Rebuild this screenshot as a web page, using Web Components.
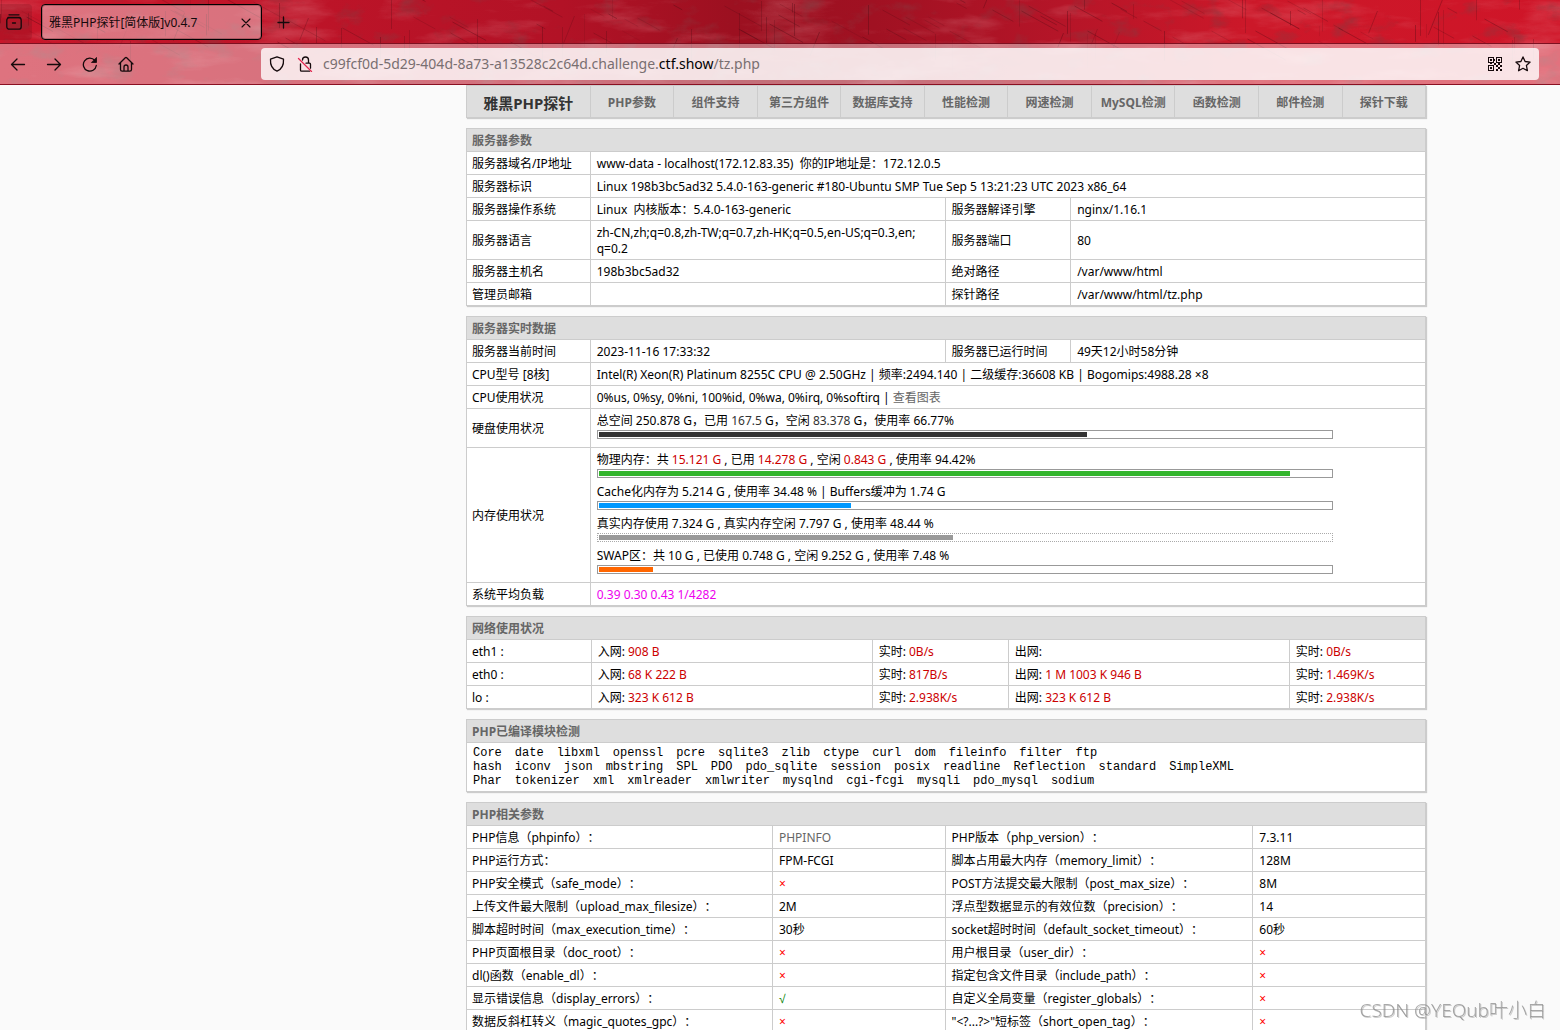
<!DOCTYPE html>
<html lang="zh-CN">
<head>
<meta charset="utf-8">
<title>雅黑PHP探针[简体版]v0.4.7</title>
<style>
html,body{margin:0;height:100%}
body{background:#fafafa;color:#000;font:12px/16px "Noto Sans","Noto Sans CJK SC",sans-serif;text-spacing-trim:space-all;display:flex;flex-direction:column;overflow:hidden}
</style>
</head>
<body>
<browser-bar></browser-bar>
<probe-page></probe-page>
<water-mark>CSDN @YEQub叶小白</water-mark>
<script>
const define=(name,html,setup)=>{
  const t=document.createElement('template');
  t.innerHTML=html;
  customElements.define(name,class extends HTMLElement{
    constructor(){super();this.attachShadow({mode:'open'}).append(t.content.cloneNode(true));}
    connectedCallback(){if(setup)setup(this,this.shadowRoot);}
  });
};

/* scratched red metal behind the tab strip and toolbar */
define('theme-texture',`
<style>:host{display:block;position:absolute;inset:0;z-index:-1;overflow:hidden}svg{display:block;width:100%;height:100%}</style>
<svg viewBox="0 0 1560 85" preserveAspectRatio="none" aria-hidden="true">
<defs>
<linearGradient id="g"><stop offset="0" stop-color="#c9162a"/><stop offset=".2" stop-color="#bd1428"/><stop offset=".36" stop-color="#b21226"/><stop offset=".47" stop-color="#9c1020"/><stop offset=".56" stop-color="#a01122"/><stop offset=".68" stop-color="#b51528"/><stop offset=".8" stop-color="#cc1829"/><stop offset="1" stop-color="#cf1528"/></linearGradient>
<filter id="w" x="0" y="0" width="100%" height="100%"><feTurbulence type="fractalNoise" baseFrequency=".012 .05" numOctaves="6" seed="4"/><feColorMatrix values="0 0 0 0 .9  0 0 0 0 .5  0 0 0 0 .52  2 0 0 0 -1"/></filter>
<filter id="d" x="0" y="0" width="100%" height="100%"><feTurbulence type="fractalNoise" baseFrequency=".03 .05" numOctaves="6" seed="9"/><feColorMatrix values="0 0 0 0 .25  0 0 0 0 .04  0 0 0 0 .05  2.6 0 0 0 -1.45"/></filter>
</defs>
<rect width="1560" height="85" fill="url(#g)"/>
<rect width="1560" height="85" filter="url(#w)" opacity=".3"/>
<rect width="1560" height="85" filter="url(#d)" opacity=".7"/>
<g id="s" fill="none" stroke="#4a0a12" stroke-width=".8"></g>
</svg>`,(el,r)=>{
  let n=11,rnd=()=>(n=(n*16807)%2147483647)/2147483647,g=r.getElementById('s');
  for(let i=0;i<150;i++){
    const p=document.createElementNS('http://www.w3.org/2000/svg','path');
    const x=Math.round(rnd()*1560)+.5,y=Math.round(rnd()*50)-8,k=rnd();
    const l=8+rnd()*30;
    p.setAttribute('d',k<.35?`M${x} ${y}v${l}`:k<.9?`M${x} ${y}l${l} ${l*.55}`:`M${x} ${y}l${-l*.4} ${l}`);
    p.setAttribute('stroke-opacity',(.12+rnd()*.35).toFixed(2));
    g.append(p);
  }
});

define('browser-bar',`
<style>
:host{display:block;flex:none;position:relative;z-index:0;font:12px/16px "Noto Sans","Noto Sans CJK SC",sans-serif;color:#15090b}
button{all:unset;box-sizing:border-box;display:grid;place-items:center;cursor:pointer}
svg{display:block;fill:none;stroke:currentColor;stroke-width:1.5;stroke-linecap:round;stroke-linejoin:round}
.tools svg,.view svg{stroke-width:1.3}
.tabs{display:flex;align-items:center;height:43px;border-bottom:1px solid #7e1020}
.view{width:32px;height:36px;padding-right:4px;background:#0000001a;border-radius:0 4px 4px 0}
.tab{display:flex;align-items:center;justify-content:space-between;box-sizing:border-box;width:221px;height:36px;margin-left:9px;padding:2px 8px 0 7px;border:1px solid #000;box-shadow:inset 0 0 0 1px #0003;border-radius:4px;background:#ffffff66}
.new{margin-left:13px;width:16px;height:16px}
.tools{display:flex;align-items:center;height:40px;background:#ffffff66;border-bottom:1px solid #8a1022}
.nav{display:flex;gap:20px;padding-left:10px;width:251px}
.url{flex:1;display:flex;align-items:center;gap:12px;height:32px;margin-right:21px;padding:0 8px;border-radius:4px;background:#ffffffcc;box-sizing:border-box}
label{flex:1;display:flex;position:relative;margin-left:-2px}
input{all:unset;flex:1;height:24px;font:14px/24px "Noto Sans",sans-serif;color:transparent;caret-color:#000}
.addr{position:absolute;inset:0;font:14px/24px "Noto Sans",sans-serif;color:#796f71;white-space:nowrap;pointer-events:none}
.addr b{font-weight:400;color:#000}
</style>
<theme-texture></theme-texture>
<div class="tabs">
<button class="view" aria-label="Firefox View"><svg width="16" height="16" viewBox="0 0 16 16"><path d="M3 .8h10M2 3.500h12M6.500 9h3"/><rect x=".8" y="3.700" width="14.400" height="11.500" rx="2.500"/></svg></button>
<div class="tab"><span>雅黑PHP探针[简体版]v0.4.7</span><button aria-label="关闭标签页"><svg width="14" height="14" viewBox="0 0 14 14" style="stroke-width:1.1"><path d="M3 3l8 8M11 3l-8 8"/></svg></button></div>
<button class="new" aria-label="新建标签页"><svg width="16" height="16" viewBox="0 0 16 16" style="stroke-width:1.3"><path d="M8.500 3v11M3 8.500h11"/></svg></button>
</div>
<div class="tools">
<div class="nav">
<button aria-label="后退"><svg width="16" height="16" viewBox="0 0 16 16"><path d="M14.500 8.500H1.500M7 3L1.500 8.500 7 14"/></svg></button>
<button aria-label="前进"><svg width="16" height="16" viewBox="0 0 16 16"><path d="M1.500 8.500h13M9 3l5.500 5.500L9 14"/></svg></button>
<button aria-label="刷新"><svg width="16" height="16" viewBox="0 0 16 16"><path d="M14.300 9.500A6.500 6.500 0 1 1 12.800 4.400"/><path d="M14.500 1.800v4.700H9.800z" fill="currentColor" stroke-width=".8"/></svg></button>
<button aria-label="主页"><svg width="16" height="16" viewBox="0 0 16 16"><path d="M1 8l6.300-6.300a1 1 0 0 1 1.400 0L15 8M2.500 7v6.500a1.700 1.700 0 0 0 1.700 1.700h7.600a1.700 1.700 0 0 0 1.700-1.700V7M6 15v-4a2 2 0 0 1 4 0v4"/></svg></button>
</div>
<div class="url">
<svg width="16" height="16" viewBox="0 0 16 16"><path d="M8 .8l6.500 2.400c.4 5.800-1.500 9.800-6.500 12-5-2.200-6.900-6.200-6.500-12z"/></svg>
<svg width="16" height="16" viewBox="0 0 16 16"><path d="M5.500 4a3 3 0 0 1 6 0V7M9 7.200h3.500a1 1 0 0 1 1 1v4M3.500 8v6.200a1 1 0 0 0 1 1h8"/><path d="M1.500 2.500l13 13" stroke="#e22850"/></svg>
<label><input aria-label="地址"><span class="addr">c99fcf0d-5d29-404d-8a73-a13528c2c64d.challenge.<b>ctf.show</b>/tz.php</span></label>
<svg width="16" height="16" viewBox="0 0 16 16"><path d="M1 1h6v6H1zM2 2v4h4V2zM9 1h6v6H9zM10 2v4h4V2zM1 9h6v6H1zM2 10v4h4v-4z" fill="currentColor" fill-rule="evenodd" stroke="none"/><path d="M3 3h2v2H3zM11 3h2v2h-2zM3 11h2v2H3zM7 3h1v2H7zM7 7h2v2H7zM9 9h2v2H9zM13 9h2v2h-2zM11 11h2v2h-2zM9 13h2v2H9zM13 13h2v2h-2zM3 7h2v1H3zM11 7h2v2h-2z" fill="currentColor" stroke="none"/></svg>
<svg width="16" height="16" viewBox="0 0 16 16"><path d="M8 .9l2.100 4.600 5 .6-3.700 3.400 1 5.200L8 12.300l-4.400 2.400 1-5.200L.9 6.100l5-.6z"/></svg>
</div>
</div>`);

define('probe-page',`
<style>
:host{flex:1;min-height:0;overflow:hidden;display:grid;grid-template-columns:466fr 960fr 134fr;align-items:start}
main{grid-column:2;display:flex;flex-direction:column;gap:10px;min-width:0}
</style>
<main>
<probe-nav></probe-nav>
<probe-table cols="12.9,37.1,13,37" heading="服务器参数" data="server"></probe-table>
<probe-table cols="12.9,37.1,13,37" heading="服务器实时数据" data="live"></probe-table>
<probe-table cols="13,29.3,14.2,29.3,14.2" heading="网络使用状况" data="net"></probe-table>
<probe-table cols="100" heading="PHP已编译模块检测" data="mods"></probe-table>
<probe-table cols="31.9,18.1,32,18" heading="PHP相关参数" data="php"></probe-table>
</main>`);

define('probe-nav',`
<style>
:host{display:block}
nav{display:flex;box-sizing:border-box;height:33px;border:1px solid #ccc;background:#dedede;box-shadow:1px 1px 1px #ccc;font-weight:700}
a{flex:1 1 0;min-width:0;display:grid;place-items:center;padding-top:2px;text-decoration:none;color:#666;border-left:1px solid #ccc;white-space:nowrap}
.brand{flex:none;width:12.8%;border:0;font-size:15px;color:#333}
</style>
<nav><a class="brand" href="#">雅黑PHP探针</a></nav>`,(el,r)=>{
  for(const t of ['PHP参数','组件支持','第三方组件','数据库支持','性能检测','网速检测','MySQL检测','函数检测','邮件检测','探针下载']){
    const a=document.createElement('a');a.href='#';a.textContent=t;r.querySelector('nav').append(a);
  }
});

define('usage-bar',`
<style>
:host{display:block;width:89%;padding:1px;margin:1px 0 6px;border:1px solid #999}
:host([dotted]){border:1px dotted #aaa}
div{height:5px;background:var(--c)}
</style><div></div>`,(el,r)=>{
  const d=r.querySelector('div');
  d.style.width=el.getAttribute('value')+'%';
  d.style.setProperty('--c',el.getAttribute('color'));
});

const x='<span class="no">×</span>';
const bar=(v,c,a='')=>`<usage-bar value="${v}" color="${c}" ${a}></usage-bar>`;
const red=s=>`<span class="red">${s}</span>`;
const net=(n,a,b,c,d)=>[n+' :','入网: '+red(a),'实时: '+red(b),'出网: '+red(c),'实时: '+red(d)];
const words=l=>'<div class="mods">'+l.split(' ').map(w=>`<span>${w}</span>`).join('')+'</div>';
const data={
server:[
['服务器域名/IP地址',['www-data - localhost(172.12.83.35)&nbsp; 你的IP地址是：172.12.0.5',3]],
['服务器标识',['Linux 198b3bc5ad32 5.4.0-163-generic #180-Ubuntu SMP Tue Sep 5 13:21:23 UTC 2023 x86_64',3]],
['服务器操作系统','Linux &nbsp;内核版本：5.4.0-163-generic','服务器解译引擎','nginx/1.16.1'],
['服务器语言','zh-CN,zh;q=0.8,zh-TW;q=0.7,zh-HK;q=0.5,en-US;q=0.3,en;<wbr>q=0.2','服务器端口','80'],
['服务器主机名','198b3bc5ad32','绝对路径','/var/www/html'],
['管理员邮箱','','探针路径','/var/www/html/tz.php']],
live:[
['服务器当前时间','2023-11-16 17:33:32','服务器已运行时间','49天12小时58分钟'],
['CPU型号 [8核]',['Intel(R) Xeon(R) Platinum 8255C CPU @ 2.50GHz | 频率:2494.140 | 二级缓存:36608 KB | Bogomips:4988.28 ×8',3]],
['CPU使用状况',['0%us, 0%sy, 0%ni, 100%id, 0%wa, 0%irq, 0%softirq | <a href="#">查看图表</a>',3]],
['硬盘使用状况',['总空间 250.878&nbsp;G，已用 <span class="dim">167.5</span>&nbsp;G，空闲 <span class="dim">83.378</span>&nbsp;G，使用率 66.77%'+bar(66.77,'#333'),3]],
['内存使用状况',['物理内存：共 '+red('15.121 G')+' , 已用 '+red('14.278 G')+' , 空闲 '+red('0.843 G')+' , 使用率 94.42%'+bar(94.42,'#33b52d')
+'Cache化内存为 5.214 G , 使用率 34.48 % | Buffers缓冲为 1.74 G'+bar(34.48,'#0099ff')
+'真实内存使用 7.324 G , 真实内存空闲 7.797 G , 使用率 48.44 %'+bar(48.44,'#999','dotted')
+'SWAP区：共 10 G , 已使用 0.748 G , 空闲 9.252 G , 使用率 7.48 %'+bar(7.48,'#ff6600'),3]],
['系统平均负载',['<span class="load">0.39 0.30 0.43 1/4282</span>',3]]],
net:[net('eth1','908 B','0B/s','','0B/s'),net('eth0','68 K 222 B','817B/s','1 M 1003 K 946 B','1.469K/s'),net('lo','323 K 612 B','2.938K/s','323 K 612 B','2.938K/s')],
mods:[[
words('Core date libxml openssl pcre sqlite3 zlib ctype curl dom fileinfo filter ftp')
+words('hash iconv json mbstring SPL PDO pdo_sqlite session posix readline Reflection standard SimpleXML')
+words('Phar tokenizer xml xmlreader xmlwriter mysqlnd cgi-fcgi mysqli pdo_mysql sodium')]],
php:[
['PHP信息（phpinfo）：','<a href="#">PHPINFO</a>','PHP版本（php_version）：','7.3.11'],
['PHP运行方式：','FPM-FCGI','脚本占用最大内存（memory_limit）：','128M'],
['PHP安全模式（safe_mode）：',x,'POST方法提交最大限制（post_max_size）：','8M'],
['上传文件最大限制（upload_max_filesize）：','2M','浮点型数据显示的有效位数（precision）：','14'],
['脚本超时时间（max_execution_time）：','30秒','socket超时时间（default_socket_timeout）：','60秒'],
['PHP页面根目录（doc_root）：',x,'用户根目录（user_dir）：',x],
['dl()函数（enable_dl）：',x,'指定包含文件目录（include_path）：',x],
['显示错误信息（display_errors）：','<span class="yes">√</span>','自定义全局变量（register_globals）：',x],
['数据反斜杠转义（magic_quotes_gpc）：',x,'"&lt;?...?&gt;"短标签（short_open_tag）：',x]]
};

define('probe-table',`
<style>
:host{display:block}
table{width:100%;table-layout:fixed;border-collapse:collapse;background:#fff;box-shadow:1px 1px 1px #ccc}
th,td{height:16px;padding:4px 6px 2px;border:1px solid #ccc;text-align:left;vertical-align:middle}
th{background:#dedede;color:#666;font-weight:700}
th,td:first-child,:host(:not([data=net])) td:nth-child(3){padding-left:5px}
:host([data=mods]) td{padding:3px 6px}
a{color:#666;text-decoration:none}
.red{color:#c00}.no{color:red}.yes{color:green;font-family:"Liberation Sans",sans-serif}.dim{color:#333}.load{color:#e0e}
.mods{display:flex;gap:13px;font:12px/14px "Liberation Mono",monospace}
</style>
<table><colgroup></colgroup><thead><tr><th></th></tr></thead><tbody></tbody></table>`,(el,r)=>{
  const cols=el.getAttribute('cols').split(',');
  r.querySelector('colgroup').innerHTML=cols.map(c=>`<col style="width:${c}%">`).join('');
  const th=r.querySelector('th');th.colSpan=cols.length;th.textContent=el.getAttribute('heading');
  r.querySelector('tbody').innerHTML=data[el.getAttribute('data')].map(row=>'<tr>'+row.map(c=>Array.isArray(c)?`<td colspan="${c[1]}">${c[0]}</td>`:`<td>${c}</td>`).join('')+'</tr>').join('');
});

define('water-mark',`
<style>:host{position:fixed;right:14px;bottom:8px;font:300 19px/24px "Noto Sans","Noto Sans CJK SC",sans-serif;color:#888b;text-shadow:1px 1px 0 #8886;pointer-events:none}</style><slot></slot>`);
</script>
</body>
</html>
